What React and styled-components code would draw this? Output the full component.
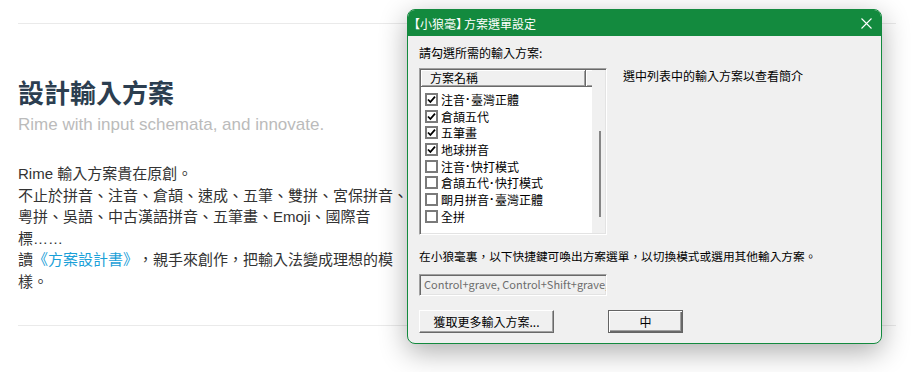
import React from 'react';
import styled, { createGlobalStyle } from 'styled-components';

const GlobalStyle = createGlobalStyle`
  html, body {
    margin: 0;
    padding: 0;
    background: #fff;
  }
  body {
    font-family: "Liberation Sans", "Noto Sans CJK TC", sans-serif;
    width: 914px;
    height: 372px;
    overflow: hidden;
  }
`;

const Page = styled.div`
  position: relative;
  width: 914px;
  height: 372px;
  padding: 23px 18px 0;
  box-sizing: border-box;
`;

const Rule = styled.hr`
  margin: 0;
  border: 0;
  border-top: 1px solid #eaeaea;
`;

const Section = styled.section`
  padding: 55px 0 33px;
  width: 392px;
`;

const Heading = styled.h1`
  margin: 0;
  font-size: 26px;
  line-height: 30px;
  font-weight: 700;
  color: #2c3e50;
  font-family: "Liberation Sans", "Noto Sans CJK TC", sans-serif;
`;

const Subtitle = styled.p`
  margin: 0;
  font-size: 17px;
  line-height: 20px;
  color: #bbbbbb;
  padding-top: 6px;
`;

const Body = styled.p`
  margin: 28px 0 0;
  font-size: 15px;
  line-height: 21.5px;
  color: #333;
  text-spacing-trim: space-all;
`;

const Link = styled.a`
  color: #1aa0d8;
  text-decoration: none;
`;

/* ---- dialog window ---- */

const Dialog = styled.div`
  position: absolute;
  left: 407px;
  top: 9px;
  width: 475px;
  height: 335px;
  box-sizing: border-box;
  border: 1px solid #138a3e;
  border-radius: 8px;
  overflow: hidden;
  background: #f0f0f0;
  box-shadow: 0 8px 28px rgba(0, 0, 0, 0.32);
  font-family: "Noto Sans CJK TC", "Liberation Sans", sans-serif;
  font-size: 12px;
  color: #000;
  display: flex;
  flex-direction: column;
`;

const TitleBar = styled.div`
  height: 26px;
  flex: 0 0 26px;
  background: #138a3e;
  color: #fff;
  display: flex;
  align-items: center;
  justify-content: space-between;
  padding: 0 9px 0 4px;
  font-size: 12px;
`;

const Bracket = styled.span`
  margin-left: ${p => p.$ml || 0}px;
  letter-spacing: ${p => p.$ls || 0}px;
`;

const CloseIcon = () => (
  <svg width="11" height="11" viewBox="0 0 11 11">
    <path d="M0.5 0.5 L10.5 10.5 M10.5 0.5 L0.5 10.5" stroke="#fff" strokeWidth="1.1" fill="none" />
  </svg>
);

const Content = styled.div`
  padding: 9px 11px 0;
  display: flex;
  flex-direction: column;
`;

const Label = styled.div`
  line-height: 16px;
  height: 16px;
  margin-bottom: ${p => p.$gap || 0}px;
  white-space: nowrap;
`;

const Row = styled.div`
  display: flex;
  align-items: flex-start;
  gap: ${p => p.$gap || 0}px;
`;

const ListBox = styled.div`
  width: 188px;
  height: 167px;
  box-sizing: border-box;
  border-style: solid;
  border-width: 1px;
  border-color: #a0a0a0 #ffffff #ffffff #a0a0a0;
  box-shadow: inset 1px 1px 0 #696969, inset -1px -1px 0 #e3e3e3;
  padding: 1px;
  display: flex;
  background: #fff;
`;

const ListMain = styled.div`
  width: 169px;
  display: flex;
  flex-direction: column;
  background: #fff;
`;

const HeaderRow = styled.div`
  display: flex;
  height: 17px;
`;

const HeaderCell = styled.div`
  box-sizing: border-box;
  flex: ${p => (p.$w ? `0 0 ${p.$w}px` : '1')};
  height: 17px;
  background: #f0f0f0;
  border-style: solid;
  border-width: 0 1px 1px 0;
  border-color: #696969;
  box-shadow: inset 1px 1px 0 #fff, inset -1px -1px 0 #a0a0a0;
  padding-left: 9px;
  line-height: 16px;
  overflow: hidden;
  white-space: nowrap;
`;

const Items = styled.div`
  padding-top: 4px;
`;

const Item = styled.div`
  display: flex;
  align-items: center;
  height: 16.7px;
  padding-left: 4px;
  white-space: nowrap;
`;

const Dot = styled.span`
  font-family: "Liberation Sans", sans-serif;
  font-weight: 700;
  padding: 0 1px;
`;

const Box = styled.span`
  width: 13px;
  height: 13px;
  box-sizing: border-box;
  border: 2px solid #7a7a7a;
  background: #fff;
  display: flex;
  align-items: center;
  justify-content: center;
  margin-right: 3px;
  flex: 0 0 13px;
`;

const Check = () => (
  <svg width="9" height="9" viewBox="0 0 9 9">
    <path d="M1 4.5 L3.4 7 L8 1.6" stroke="#000" strokeWidth="1.8" fill="none" />
  </svg>
);

const ScrollTrack = styled.div`
  margin-left: 2px;
  width: 15px;
  background: #f0f0f0;
  padding-top: 61px;
  box-sizing: border-box;
`;

const Thumb = styled.div`
  width: 2px;
  height: 86px;
  margin-left: 7px;
  background: #868686;
`;

const Description = styled.div`
  line-height: 14px;
  padding-top: 1px;
  white-space: nowrap;
`;

const Hint = styled.div`
  margin-top: 13px;
  line-height: 16px;
  height: 16px;
  font-size: 11.7px;
  white-space: nowrap;
`;

const KeyField = styled.div`
  margin-top: 10px;
  width: 188px;
  height: 22px;
  box-sizing: border-box;
  border-style: solid;
  border-width: 1px;
  border-color: #a0a0a0 #ffffff #ffffff #a0a0a0;
  box-shadow: inset 1px 1px 0 #696969, inset -1px -1px 0 #e3e3e3;
  padding-left: 4px;
  line-height: 19px;
  color: #6d6d6d;
  font-size: 11px;
  overflow: hidden;
  white-space: nowrap;
`;

const Buttons = styled.div`
  margin-top: 14px;
  display: flex;
  gap: 54px;
`;

const Button = styled.button`
  width: ${p => p.$w}px;
  height: 23px;
  box-sizing: border-box;
  font-family: inherit;
  font-size: 12px;
  color: #000;
  background: #f0f0f0;
  padding: 0;
  border-style: solid;
  border-width: 1px;
  border-color: ${p => (p.$default ? '#646464' : '#fff #696969 #696969 #fff')};
  box-shadow: ${p =>
    p.$default
      ? 'inset 1px 1px 0 #fff, inset -1px -1px 0 #696969, inset -2px -2px 0 #a0a0a0'
      : 'inset -1px -1px 0 #a0a0a0'};
  line-height: 20px;
`;

const schemes = [
  { name: ['注音', '臺灣正體'], on: true },
  { name: ['倉頡五代'], on: true },
  { name: ['五筆畫'], on: true },
  { name: ['地球拼音'], on: true },
  { name: ['注音', '快打模式'], on: false },
  { name: ['倉頡五代', '快打模式'], on: false },
  { name: ['朙月拼音', '臺灣正體'], on: false },
  { name: ['全拼'], on: false },
];

export default function App() {
  return (
    <>
      <GlobalStyle />
      <Page>
        <Rule />
        <Section>
          <Heading>設計輸入方案</Heading>
          <Subtitle>Rime with input schemata, and innovate.</Subtitle>
          <Body>
            Rime 輸入方案貴在原創。
            <br />
            不止於拼音、注音、倉頡、速成、五筆、雙拼、宮保拼音、粵拼、吳語、中古漢語拼音、五筆畫、Emoji、國際音標……
            <br />
            讀<Link href="#">《方案設計書》</Link>，親手來創作，把輸入法變成理想的模樣。
          </Body>
        </Section>
        <Rule />

        <Dialog>
          <TitleBar>
            <span>
              <Bracket $ml={-4}>【</Bracket>小狼毫<Bracket $ls={-4}>】</Bracket>方案選單設定
            </span>
            <CloseIcon />
          </TitleBar>
          <Content>
            <Label $gap={7}>請勾選所需的輸入方案:</Label>
            <Row $gap={16}>
              <ListBox>
                <ListMain>
                  <HeaderRow>
                    <HeaderCell $w={165}>方案名稱</HeaderCell>
                    <HeaderCell />
                  </HeaderRow>
                  <Items>
                    {schemes.map(s => (
                      <Item key={s.name.join('-')}>
                        <Box>{s.on && <Check />}</Box>
                        {s.name[0]}
                        {s.name[1] && (
                          <>
                            <Dot>·</Dot>
                            {s.name[1]}
                          </>
                        )}
                      </Item>
                    ))}
                  </Items>
                </ListMain>
                <ScrollTrack>
                  <Thumb />
                </ScrollTrack>
              </ListBox>
              <Description>選中列表中的輸入方案以查看簡介</Description>
            </Row>
            <Hint>在小狼毫裏，以下快捷鍵可喚出方案選單，以切換模式或選用其他輸入方案。</Hint>
            <KeyField>Control+grave, Control+Shift+grave,</KeyField>
            <Buttons>
              <Button $w={135}>獲取更多輸入方案...</Button>
              <Button $w={75} $default>中</Button>
            </Buttons>
          </Content>
        </Dialog>
      </Page>
    </>
  );
}
